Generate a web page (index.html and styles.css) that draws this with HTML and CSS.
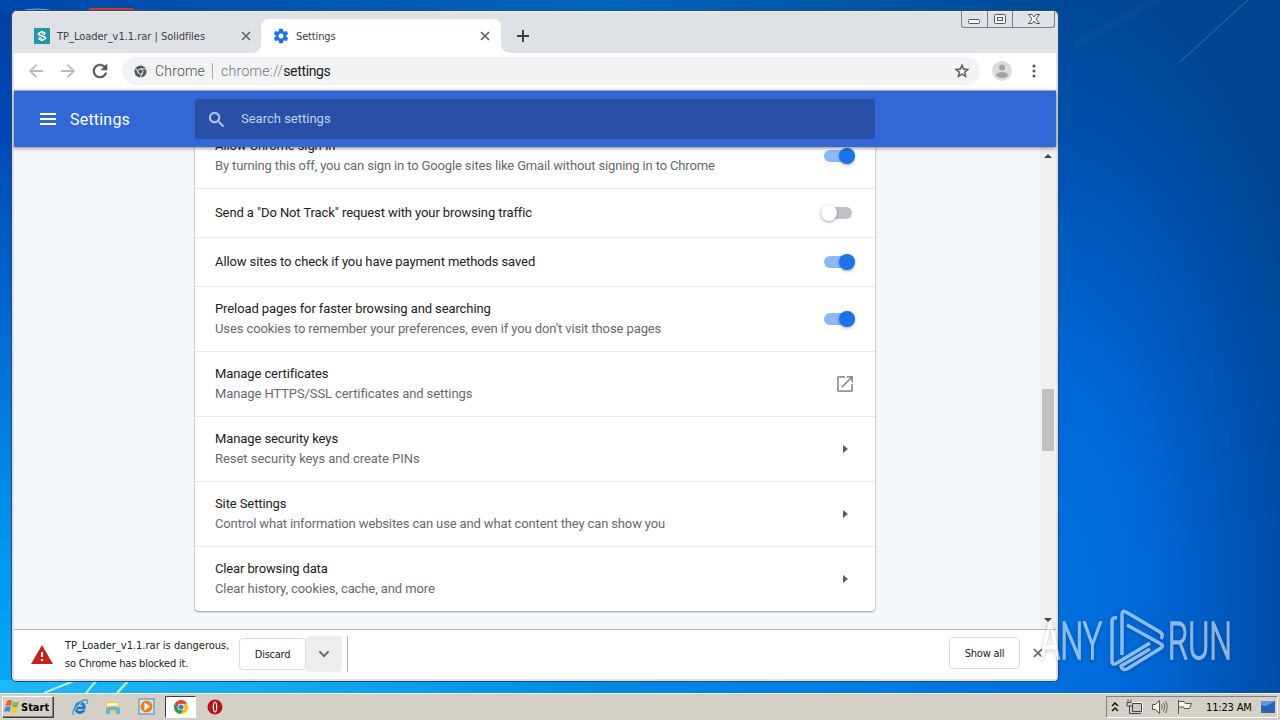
FILE: index.html
```html
<!DOCTYPE html>
<html lang="en">
<head>
  <meta charset="UTF-8" />
  <meta name="viewport" content="width=device-width, initial-scale=1.0"/>
  <title>Settings</title>
  <link rel="stylesheet" href="styles.css">
</head>
<body>

  <div class="desktop">
    <svg class="wallpaper" width="1280" height="693" viewBox="0 0 1280 693">
      <path d="M1180 62 L1250 -2" stroke="#8fc1e8" stroke-opacity=".22" stroke-width="1.5"/>
      <path d="M1075 45 L1165 -5" stroke="#8fc1e8" stroke-opacity=".04" stroke-width="8"/>
      <path d="M44 693 L76 680 M86 693 L96 681" stroke="#e4f8ff" stroke-opacity=".8" stroke-width="2"/>
      <path d="M117 693 L129 680" stroke="#b8f0a8" stroke-width="2.5"/>
      <path d="M88 10 L90 8 H133 L135 10 V12 H88Z" fill="#d03a2c"/>
      <path d="M25 10 Q37 8 49 10" stroke="#8fa9cf" stroke-width="1" fill="none"/>
    </svg>

    <div class="window">
      <div class="tabstrip">
        <div class="tab">
          <svg width="16" height="16" viewBox="0 0 16 16"><rect width="16" height="16" fill="#2596a8"/><path d="M11.500 5.500 L8 3.500 L4.500 5.500 V6.500 L11.500 9.500 V10.500 L8 12.500 L4.500 10.500" fill="none" stroke="#fff" stroke-width="1.500"/><path d="M5 9 L8 10.500 M8 5.500 L11 7" stroke="#fff" stroke-width="1"/></svg>
          <span class="tab-title">TP_Loader_v1.1.rar | Solidfiles</span>
          <svg class="close" width="10" height="10" viewBox="0 0 10 10"><path d="M1 1 L9 9 M9 1 L1 9"/></svg>
        </div>
        <div class="tab active">
          <svg width="16" height="16" viewBox="1 1 22 22"><path fill="#1a73e8" d="M19.430 12.980c.04-.32.07-.64.07-.98s-.03-.66-.07-.98l2.110-1.650c.19-.15.24-.42.12-.64l-2-3.460c-.12-.22-.39-.3-.61-.22l-2.490 1c-.52-.4-1.080-.73-1.690-.98l-.38-2.650C14.460 2.180 14.250 2 14 2h-4c-.25 0-.46.18-.49.42l-.38 2.650c-.61.25-1.170.59-1.690.98l-2.490-1c-.23-.09-.49 0-.61.22l-2 3.460c-.13.22-.07.49.12.64l2.110 1.650c-.04.32-.07.65-.07.98s.03.66.07.98l-2.110 1.650c-.19.15-.24.42-.12.64l2 3.460c.12.22.39.3.61.22l2.490-1c.52.4 1.080.73 1.690.98l.38 2.650c.03.24.24.42.49.42h4c.25 0 .46-.18.49-.42l.38-2.650c.61-.25 1.170-.59 1.690-.98l2.490 1c.23.09.49 0 .61-.22l2-3.460c.12-.22.07-.49-.12-.64l-2.110-1.650zM12 15.500c-1.930 0-3.500-1.570-3.500-3.500s1.570-3.500 3.500-3.500 3.500 1.570 3.500 3.500-1.570 3.500-3.500 3.500z"/></svg>
          <span class="tab-title">Settings</span>
          <svg class="close" width="10" height="10" viewBox="0 0 10 10"><path d="M1 1 L9 9 M9 1 L1 9"/></svg>
        </div>
        <svg class="new-tab" width="12" height="12" viewBox="0 0 12 12"><path d="M6 0 V12 M0 6 H12"/></svg>
        <div class="controls">
          <span><svg width="13" height="6"><rect x=".5" y=".5" width="11" height="4" rx="1"/></svg></span>
          <span><svg width="12" height="11"><rect x=".5" y=".5" width="11" height="9" rx="1"/><rect x="3.500" y="3.500" width="5" height="3"/></svg></span>
          <span class="wide"><svg width="12" height="11"><path d="M.5 .5 H4 L6 3 L8 .5 H11.500 L8 5 L11.500 9.500 H8 L6 7 L4 9.500 H.5 L4 5Z"/></svg></span>
        </div>
      </div>

      <div class="toolbar">
        <svg width="16" height="16" viewBox="3 3 18 18" fill="#babcbe"><path d="M20 11H7.830l5.590-5.590L12 4l-8 8 8 8 1.410-1.410L7.830 13H20z"/></svg>
        <svg width="16" height="16" viewBox="3 3 18 18" fill="#babcbe"><path d="M12 4l-1.410 1.410L16.170 11H4v2h12.170l-5.580 5.590L12 20l8-8z"/></svg>
        <svg width="16" height="16" viewBox="3 3 18 18" fill="#505357" stroke="#505357" stroke-width=".4"><path d="M17.650 6.350C16.200 4.900 14.210 4 12 4c-4.420 0-7.990 3.580-7.990 8s3.570 8 7.990 8c3.730 0 6.840-2.550 7.730-6h-2.080c-.82 2.330-3.040 4-5.650 4-3.310 0-6-2.690-6-6s2.690-6 6-6c1.660 0 3.140.69 4.220 1.780L13 11h7V4z"/></svg>
        <div class="omnibox">
          <svg width="13" height="13" viewBox="0 0 14 14"><circle cx="7" cy="7" r="6.500" fill="#55585c"/><circle cx="7" cy="7" r="2.700" fill="none" stroke="#f1f3f4" stroke-width="1"/><path d="M7 4.200 H13 M4.600 8.400 L1.600 3.200 M9.400 8.400 L6.500 13.500" stroke="#f1f3f4"/></svg>
          <span class="origin">Chrome</span>
          <span class="divider"></span>
          <span class="url">chrome://<b>settings</b></span>
          <svg class="star" width="16" height="16" viewBox="1 1 22 22" fill="#55585c" stroke="#55585c" stroke-width=".4"><path d="M22 9.240l-7.190-.62L12 2 9.190 8.630 2 9.240l5.460 4.730L5.820 21 12 17.270 18.180 21l-1.630-7.030L22 9.240zM12 15.400l-3.760 2.270 1-4.280-3.320-2.880 4.380-.38L12 6.100l1.710 4.040 4.380.38-3.320 2.880 1 4.280L12 15.400z"/></svg>
        </div>
        <svg class="avatar" width="20" height="20"><circle cx="10" cy="10" r="10" fill="#dcdcdc"/><circle cx="10" cy="6.500" r="3" fill="#a2a2a2"/><ellipse cx="10" cy="14" rx="6" ry="3" fill="#a2a2a2"/></svg>
        <svg class="more" width="4" height="14" fill="#505357"><circle cx="2" cy="2" r="1.500"/><circle cx="2" cy="7" r="1.500"/><circle cx="2" cy="12" r="1.500"/></svg>
      </div>

      <div class="header">
        <svg class="menu" width="16" height="12"><path d="M0 1 H16 M0 6 H16 M0 11 H16" stroke="#fff" stroke-width="2"/></svg>
        <span class="heading">Settings</span>
        <div class="search">
          <svg width="15" height="15" viewBox="3 3 17.500 17.500" fill="#b5c6ee" stroke="#b5c6ee" stroke-width=".5"><path d="M15.500 14h-.79l-.28-.27C15.410 12.590 16 11.110 16 9.500 16 5.910 13.090 3 9.500 3S3 5.910 3 9.500 5.910 16 9.500 16c1.610 0 3.090-.59 4.230-1.570l.27.28v.79l5 4.990L20.490 19l-4.990-5zm-6 0C7.010 14 5 11.990 5 9.500S7.010 5 9.500 5 14 7.010 14 9.500 11.990 14 9.500 14z"/></svg>
          <span>Search settings</span>
        </div>
      </div>

      <div class="page">
        <div class="card">
          <div class="row">
            <div class="label"><p>Allow Chrome sign-in</p><p class="sub tight">By turning this off, you can sign in to Google sites like Gmail without signing in to Chrome</p></div>
            <div class="toggle on"></div>
          </div>
          <div class="row single">
            <div class="label"><p>Send a "Do Not Track" request with your browsing traffic</p></div>
            <div class="toggle"></div>
          </div>
          <div class="row single">
            <div class="label"><p>Allow sites to check if you have payment methods saved</p></div>
            <div class="toggle on"></div>
          </div>
          <div class="row">
            <div class="label"><p>Preload pages for faster browsing and searching</p><p class="sub">Uses cookies to remember your preferences, even if you don't visit those pages</p></div>
            <div class="toggle on"></div>
          </div>
          <div class="row">
            <div class="label"><p>Manage certificates</p><p class="sub">Manage HTTPS/SSL certificates and settings</p></div>
            <svg class="external" width="16" height="16" viewBox="3 3 18 18" fill="#909396"><path d="M19 19H5V5h7V3H5c-1.110 0-2 .9-2 2v14c0 1.100.89 2 2 2h14c1.100 0 2-.9 2-2v-7h-2v7zM14 3v2h3.590l-9.830 9.830 1.410 1.410L19 6.410V10h2V3h-7z"/></svg>
          </div>
          <div class="row">
            <div class="label"><p>Manage security keys</p><p class="sub loose">Reset security keys and create PINs</p></div>
            <div class="arrow"></div>
          </div>
          <div class="row">
            <div class="label"><p>Site Settings</p><p class="sub tight">Control what information websites can use and what content they can show you</p></div>
            <div class="arrow"></div>
          </div>
          <div class="row">
            <div class="label"><p class="tight">Clear browsing data</p><p class="sub">Clear history, cookies, cache, and more</p></div>
            <div class="arrow"></div>
          </div>
        </div>
        <div class="scrollbar"><i class="up"></i><div class="thumb"></div><i class="down"></i></div>
      </div>

      <div class="shelf">
        <svg width="22" height="19" viewBox="0 0 22 19"><path d="M11 0 L22 19 H0Z" fill="#c5221f"/><path d="M11 7 V12 M11 14 V16" stroke="#fff" stroke-width="2"/></svg>
        <p class="warning">TP_Loader_v1.1.rar is dangerous,<br><span>so Chrome has blocked it.</span></p>
        <div class="button">Discard</div>
        <div class="drop"><svg width="12" height="8"><path d="M1.500 1.500 L6 6 L10.500 1.500" fill="none" stroke="#6a6d70" stroke-width="2"/></svg></div>
        <div class="shelf-line"></div>
        <div class="button show-all">Show all</div>
        <svg class="close" width="10" height="10" viewBox="0 0 10 10"><path d="M1 1 L9 9 M9 1 L1 9"/></svg>
      </div>
    </div>

    <svg class="watermark" width="210" height="80" viewBox="1030 600 210 80">
      <g fill="#fff" stroke="#fff" stroke-width="1.600">
        <text x="1040" y="659" textLength="62" lengthAdjust="spacingAndGlyphs">ANY</text>
        <text x="1168" y="659" textLength="64" lengthAdjust="spacingAndGlyphs">RUN</text>
      </g>
      <g fill="none" stroke="#fff" stroke-width="3.500" stroke-linejoin="round">
        <path d="M1117 618 Q1112 617 1112 621 V661 Q1112 666 1117 663 L1150 643"/>
        <path d="M1122 655 V614 Q1122 610 1126 612 L1160 632 Q1164 635 1161 639"/>
        <path d="M1127 625 L1161 644 Q1164 646 1161 648 L1127 669 Q1122 671 1121 666 L1150 649"/>
      </g>
    </svg>
  </div>

  <div class="taskbar">
    <div class="start">
      <svg width="16" height="16" viewBox="0 0 16 16"><path d="M3 2 Q6 0 8 2 L7 7 Q4 5.500 1.500 7Z" fill="#e8622c"/><path d="M9 2.500 Q12 4 15 2.500 L13.500 8 Q11 9 8 7.500Z" fill="#7dbb42"/><path d="M1.300 8 Q4 6.500 6.700 8 L5.500 13 Q3 11.500 0 13Z" fill="#3d8fdb"/><path d="M7.700 8.500 Q10 10 13.200 9 L12 14 Q9 15 6.500 13.500Z" fill="#f7c52f"/></svg>
      <span>Start</span>
    </div>
    <svg class="app ie" width="18" height="18" viewBox="0 0 18 18"><path d="M13 12 Q12 14.500 8.500 14.500 Q4.500 14 4.800 9.500 Q5.500 5 9.500 5 Q13.500 5.500 13.300 9.800 H6" fill="none" stroke="#1c7cd0" stroke-width="2.800"/><path d="M3 16.500 Q0 15 5 8 Q12 .5 16 2 Q17.500 3 15.500 6" fill="none" stroke="#2a9be6" stroke-width="1.300"/><path d="M3 14 Q5 8 12 3.500" fill="none" stroke="#e9b932" stroke-width="1"/></svg>
    <svg class="app" width="18" height="18" viewBox="0 0 18 18"><path d="M2 4 L7 2 L8 4 H15 V14 H2Z" fill="#edcb61"/><path d="M3 5 H14 V8 H3Z" fill="#fff3b5"/><path d="M2 10 Q9 7 16 10 V16 H12 V12 H6 V16 H2Z" fill="#67b5dc"/></svg>
    <svg class="app" width="18" height="18" viewBox="0 0 18 18"><rect x="2" y="1" width="15" height="15" fill="#d8e8f4" stroke="#4388bd"/><circle cx="9.500" cy="8.500" r="6" fill="#ef8118"/><path d="M7.500 4.500 L13 8.500 L7.500 12.500Z" fill="#fff"/></svg>
    <div class="app-active">
      <svg width="14" height="14" viewBox="0 0 14 14"><circle cx="7" cy="7" r="7" fill="#fbbf16"/><path d="M1 3.500 A7 7 0 0 1 13 3.500 L7 4 V10 L4 9Z" fill="#dd4336"/><path d="M1 3.500 A7 7 0 0 0 6.500 14 L9 10 L4.500 9Z" fill="#269a50"/><circle cx="7" cy="7" r="3.300" fill="#fff"/><circle cx="7" cy="7" r="2.600" fill="#3e7ddb"/></svg>
    </div>
    <svg class="app opera" width="16" height="16" viewBox="0 0 16 16"><circle cx="8" cy="8" r="7.500" fill="#bb1018"/><ellipse cx="8" cy="8" rx="2.300" ry="5.500" fill="#fff"/><ellipse cx="8" cy="8" rx=".9" ry="4.500" fill="#7b0c10"/></svg>

    <div class="tray">
      <svg width="8" height="10" viewBox="0 0 8 10"><path d="M1 4 L4 1 L7 4 M1 9 L4 6 L7 9" fill="none" stroke="#111" stroke-width="1.500"/></svg>
      <svg width="18" height="16" viewBox="0 0 18 16"><path d="M6.500 4.500 H15.500 V12.500 H6.500Z" fill="#c8c8c4" stroke="#444"/><path d="M5 14.500 H15 M2 .5 V4 M5 .5 V4 M1 3.500 H6.500 V7 H1Z M3.500 7 V14.500 H6" fill="none" stroke="#444"/><path d="M5.500 3.500 H16.500 V13.500" fill="none" stroke="#fff"/></svg>
      <svg width="18" height="16" viewBox="0 0 18 16"><path d="M1.500 5.500 H4.500 L8.500 1.500 V14.500 L4.500 10.500 H1.500Z" fill="#f5f5f5" stroke="#555"/><path d="M10.500 5.500 Q12 8 10.500 10.500 M12.500 3.500 Q15 8 12.500 12.500 M14.500 2 Q18 8 14.500 14" fill="none" stroke="#666"/></svg>
      <svg width="18" height="16" viewBox="0 0 18 16"><path d="M2.500 1 V15 M2.500 2.500 H8 L9.500 4.500 H15.500 L13.500 9.500 H8.500 L7.500 8 H2.500" fill="#f5f5f5" stroke="#555"/></svg>
      <span class="clock">11:23 AM</span>
      <svg class="show-desktop" width="16" height="14" viewBox="0 0 16 14"><path d="M1 1 H15 V11 H1Z" fill="#2563b8"/><path d="M1 1 H15 L6 6 L1 5Z" fill="#5c9ae0"/><path d="M1 12 H15" stroke="#173c78" stroke-width="1.500"/></svg>
    </div>
  </div>

</body>
</html>
```
FILE: styles.css
```css
* {
  box-sizing: border-box;
}

body {
  margin: 0;
  width: 1280px;
  height: 720px;
  overflow: hidden;
  font-family: Roboto, sans-serif;
  font-size: 13px;
  color: #202124;
}

p {
  margin: 0;
}

svg {
  display: block;
  flex: none;
}

.desktop {
  position: relative;
  height: 693px;
  padding: 10px 0 0 11px;
  background:
    linear-gradient(90deg, #1db8f5 0, #12adf0 260px, #008ae4 600px, #007ae5 900px, #006fde 1058px) 0 100% / 1058px 13px no-repeat,
    linear-gradient(90deg, #0047ad 0, #0064bc 600px, #004a96 1060px) 0 0 / 1060px 11px no-repeat,
    linear-gradient(#0040a4 0, #0047b4 130px, #006bcf 330px, #0094ef 540px, #08a8f6 693px) 0 0 / 14px 693px no-repeat,
    radial-gradient(ellipse 300px 640px at 1045px 600px, #0070df 0, #0068d6 35%, #0053b3 68%, #004590 100%);
}

.wallpaper {
  position: absolute;
  left: 0;
  top: 0;
}

.window {
  position: relative;
  width: 1048px;
  height: 672px;
  display: flex;
  flex-direction: column;
  border: 1px solid #29496b;
  border-radius: 6px 6px 5px 5px;
  padding: 0 2px 2px;
  background: #dee1e6;
  overflow: hidden;
}

/* tabs */
.tabstrip {
  flex: none;
  display: flex;
  align-items: flex-end;
  height: 42px;
  border-top: 1px solid #f0eeee;
}

.tab {
  display: flex;
  align-items: center;
  width: 247px;
  height: 34px;
  padding: 0 10px 0 20px;
}

.tab.active {
  position: relative;
  width: 240px;
  padding: 0 11px 0 12px;
  background: #fff;
  border-radius: 8px 8px 0 0;
}

.tab.active::before,
.tab.active::after {
  content: "";
  position: absolute;
  bottom: 0;
  width: 8px;
  height: 8px;
}

.tab.active::before {
  left: -8px;
  background: radial-gradient(circle at 0 0, transparent 7.5px, #fff 8px);
}

.tab.active::after {
  right: -8px;
  background: radial-gradient(circle at 100% 0, transparent 7.5px, #fff 8px);
}

.tab-title {
  margin-left: 7px;
  font: 11px "DejaVu Sans Condensed", "DejaVu Sans", sans-serif;
  letter-spacing: -0.02px;
  white-space: nowrap;
  color: #3c4043;
}

.tab.active .tab-title {
  letter-spacing: -0.15px;
}

.close {
  margin-left: auto;
  fill: none;
  stroke: #5f6368;
  stroke-width: 1.7;
}

.new-tab {
  margin: 0 0 11px 16px;
  stroke: #3c4043;
  stroke-width: 2;
}

.controls {
  align-self: flex-start;
  display: flex;
  margin: -1px 1px 0 auto;
  height: 17px;
  border: 1px solid #7b7f86;
  border-top: 0;
  border-radius: 0 0 3px 3px;
  fill: #f7f7f8;
  stroke: #50545c;
}

.controls span {
  width: 25px;
  display: flex;
  align-items: center;
  justify-content: center;
}

.controls span:first-child {
  padding-top: 6px;
}

.controls span + span {
  border-left: 1px solid #7b7f86;
}

.controls .wide {
  width: 42px;
}

/* address bar */
.toolbar {
  flex: none;
  display: flex;
  align-items: center;
  gap: 16px;
  height: 38px;
  padding: 0 20px 1px 14px;
  background: #fff;
  border-bottom: 1px solid #a9b9dc;
}

.omnibox {
  display: flex;
  align-items: center;
  width: 858px;
  height: 28px;
  margin-left: -2px;
  padding: 0 10px 0 12px;
  border-radius: 14px;
  background: #f1f3f4;
  font-size: 14px;
  font-weight: 300;
  color: #4c5054;
}

.origin {
  width: 50px;
  margin-left: 8px;
  letter-spacing: 0.2px;
}

.divider {
  width: 1px;
  height: 16px;
  margin: 0 8px 0 7px;
  background: #a8abaf;
}

.url {
  color: #707478;
  letter-spacing: 0.3px;
}

.url b {
  font-weight: normal;
  letter-spacing: -0.35px;
  color: #202124;
}

.star {
  margin-left: auto;
}

.avatar {
  margin-left: -4px;
}

.more {
  margin-left: 4px;
}

/* settings header */
.header {
  flex: none;
  position: relative;
  z-index: 1;
  display: flex;
  align-items: center;
  height: 56px;
  padding-left: 26px;
  background: #3367d6;
  box-shadow: 0 1px 4px rgba(0, 0, 0, 0.5);
  color: #fff;
}

.heading {
  width: 125px;
  margin-left: 14px;
  font-size: 16px;
  letter-spacing: 0.2px;
}

.search {
  display: flex;
  align-items: center;
  gap: 17px;
  width: 680px;
  height: 40px;
  padding-left: 14px;
  border-radius: 2px;
  background: #2950a7;
  color: #c1d1f1;
}

.search span {
  padding-bottom: 2px;
}

/* settings list */
.page {
  flex: 1;
  display: flex;
  min-height: 0;
  overflow: hidden;
  background: #f5f8fb;
}

.card {
  width: 680px;
  height: 487px;
  margin: -23px 165px 0 181px;
  border-radius: 4px;
  background: #fff;
  box-shadow: 0 1px 2px rgba(60, 64, 67, 0.45), 0 0 2px rgba(60, 64, 67, 0.3);
}

.row {
  display: flex;
  align-items: center;
  height: 65px;
  padding: 0 20px;
  border-bottom: 1px solid #e9eaeb;
}

.row.single {
  height: 49px;
}

.row:last-child {
  height: 64px;
  border-bottom: 0;
}

.label {
  flex: 1;
  line-height: 20px;
  letter-spacing: -0.1px;
  white-space: nowrap;
}

.sub {
  color: #666a6e;
}

.tight {
  letter-spacing: -0.14px;
}

.loose {
  letter-spacing: -0.04px;
}

.toggle {
  position: relative;
  width: 28px;
  height: 12px;
  margin-right: 3px;
  border-radius: 6px;
  background: #bdc1c6;
}

.toggle::after {
  content: "";
  position: absolute;
  left: -3px;
  top: -2px;
  width: 16px;
  height: 16px;
  border-radius: 50%;
  background: #fff;
  box-shadow: 0 1px 3px rgba(60, 64, 67, 0.5);
}

.toggle.on {
  background: #8cb8f3;
}

.toggle.on::after {
  left: 15px;
  background: #1a73e8;
}

.external {
  margin-right: 2px;
}

.arrow {
  margin-right: 7px;
  border: 4px solid transparent;
  border-left: 5px solid #5a5d61;
  border-right: 0;
}

.scrollbar {
  width: 16px;
  display: flex;
  flex-direction: column;
  align-items: center;
  padding: 7px 0;
  background: #f0f0f0;
}

.up,
.down {
  border: 4px solid transparent;
}

.up {
  border-top: 0;
  border-bottom-color: #444746;
}

.down {
  margin-top: auto;
  border-bottom: 0;
  border-top-color: #444746;
}

.thumb {
  width: 12px;
  height: 62px;
  margin-top: 231px;
  background: #c1c1c1;
}

/* download shelf */
.shelf {
  flex: none;
  display: flex;
  align-items: center;
  height: 50px;
  padding: 0 13px 0 17px;
  border-top: 1px solid #b3b6b9;
  background: #fff;
  font: 11px "DejaVu Sans Condensed", "DejaVu Sans", sans-serif;
  letter-spacing: -0.25px;
}

.warning {
  width: 174px;
  margin-left: 12px;
  line-height: 18px;
  letter-spacing: 0;
  white-space: nowrap;
}

.warning span {
  letter-spacing: -0.2px;
}

.button {
  display: flex;
  align-items: center;
  justify-content: center;
  width: 67px;
  height: 32px;
  margin-bottom: 1px;
  border: 1px solid #dadce0;
  border-radius: 4px;
}

.drop {
  display: flex;
  align-items: center;
  justify-content: center;
  width: 36px;
  height: 36px;
  margin-bottom: 2px;
  border-radius: 4px;
  background: #ededed;
}

.shelf-line {
  width: 1px;
  height: 36px;
  margin: 0 0 2px 5px;
  background: #b8babd;
}

.show-all {
  width: 71px;
  margin: 0 0 3px auto;
}

.shelf .close {
  margin: 0 0 3px 13px;
}

.watermark {
  position: absolute;
  left: 1030px;
  top: 600px;
  opacity: 0.55;
  font: 300 52px Roboto, sans-serif;
  filter: drop-shadow(0 1px 2px rgba(0, 0, 0, 0.4));
}

/* taskbar */
.taskbar {
  display: flex;
  align-items: center;
  height: 27px;
  padding: 0 2px;
  border-top: 1px solid #f6f4ef;
  background: #d4d0c8;
  font: 11px "DejaVu Sans Condensed", "DejaVu Sans", sans-serif;
  color: #000;
}

.start {
  display: flex;
  align-items: center;
  gap: 1px;
  width: 52px;
  height: 22px;
  padding-left: 1px;
  border: 1px solid #fff;
  border-right-color: #404040;
  border-bottom-color: #404040;
  box-shadow: inset -1px -1px #808080;
  font-weight: bold;
}

.app {
  margin-left: 15px;
}

.app.ie {
  margin-left: 17px;
}

.app-active {
  display: flex;
  align-items: center;
  justify-content: center;
  width: 31px;
  height: 22px;
  margin-left: 10px;
  border: 1px solid #fff;
  border-top-color: #404040;
  border-left-color: #404040;
  background: #fff;
}

.app.opera {
  margin-left: 11px;
}

.tray {
  display: flex;
  align-items: center;
  width: 172px;
  height: 22px;
  margin-left: auto;
  padding-left: 4px;
  border: 1px solid #fff;
  border-top-color: #808080;
  border-left-color: #808080;
}

.tray svg + svg {
  margin-left: 7px;
}

.clock {
  width: 47px;
  margin-left: 12px;
  letter-spacing: -0.15px;
  white-space: nowrap;
}

.tray .show-desktop {
  margin-left: 7px;
}
```
